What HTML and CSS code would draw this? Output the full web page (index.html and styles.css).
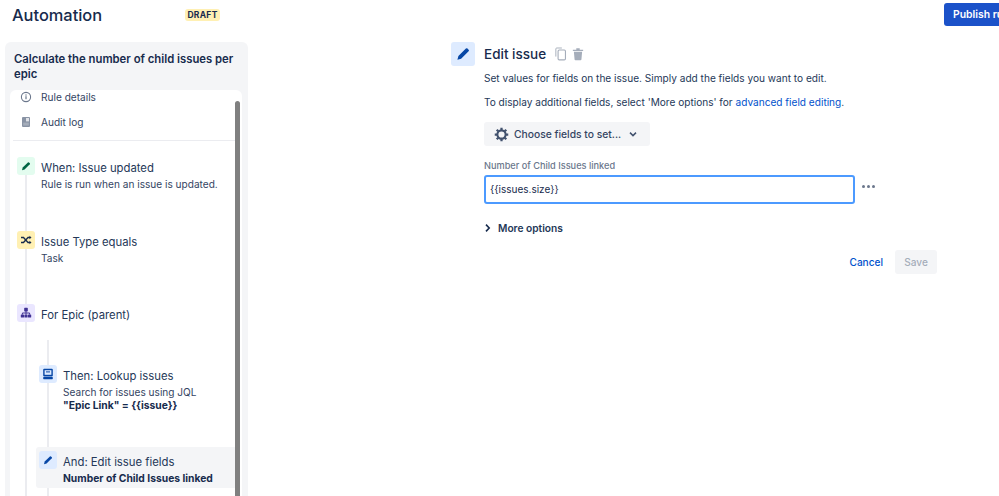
FILE: index.html
```html
<!DOCTYPE html>
<html lang="en">
<head>
<meta charset="utf-8">
<title>Automation</title>
<link rel="stylesheet" href="styles.css">
</head>
<body>
<div class="page">
  <header class="topbar">
    <h1 class="app-title">Automation</h1>
    <span class="lozenge">DRAFT</span>
    <button class="publish">Publish rule</button>
  </header>
  <div class="content">
    <aside class="sidebar">
      <h2 class="rule-name">Calculate the number of child issues per epic</h2>
      <div class="panel">
        <div class="scrollbar"></div>
        <div class="nav-item nav-first">
          <svg class="nav-icon" viewBox="0 0 12 12"><circle cx="6" cy="6" r="4.6" fill="none" stroke="#6b778c" stroke-width="1.1"/><rect x="5.4" y="5.2" width="1.2" height="3" fill="#6b778c"/><rect x="5.4" y="3.4" width="1.2" height="1.2" fill="#6b778c"/></svg>
          <span>Rule details</span>
        </div>
        <div class="nav-item">
          <svg class="nav-icon" viewBox="0 0 12 12"><rect x="2" y="1" width="8" height="10" rx="1" fill="#8993a4"/><rect x="6" y="2" width="3" height="3.4" fill="#dfe1e6"/><rect x="3.2" y="6.6" width="5.6" height="3" fill="#a5adba"/></svg>
          <span>Audit log</span>
        </div>
        <div class="divider"></div>
        <div class="tree">
          <div class="trunk"></div>
          <div class="step step-when">
            <span class="badge badge-green"><svg viewBox="0 0 18 18"><path d="M5 13.2l.7-2.6 5.2-5.2a.8.8 0 0 1 1.1 0l.8.8a.8.8 0 0 1 0 1.1l-5.2 5.2z" fill="#006644"/></svg></span>
            <div><div class="step-title">When: Issue updated</div><div class="step-sub">Rule is run when an issue is updated.</div></div>
          </div>
          <div class="step step-if">
            <span class="badge badge-yellow"><svg viewBox="0 0 18 18"><path d="M4 6.5h2.5l4.5 5H13M4 11.5h2.5l4.5-5H13" fill="none" stroke="#172b4d" stroke-width="1.3"/><path d="M12.5 4.8l2 1.7-2 1.7zM12.5 9.8l2 1.7-2 1.7z" fill="#172b4d"/></svg></span>
            <div><div class="step-title">Issue Type equals</div><div class="step-sub">Task</div></div>
          </div>
          <div class="step step-for">
            <span class="badge badge-purple"><svg viewBox="0 0 18 18"><g fill="#403294"><rect x="7.2" y="3.8" width="3.6" height="3.6" rx=".6"/><rect x="3.8" y="10.4" width="3.2" height="3.2" rx=".6"/><rect x="7.4" y="10.4" width="3.2" height="3.2" rx=".6"/><rect x="11" y="10.4" width="3.2" height="3.2" rx=".6"/></g><path d="M9 7v3.5M5.4 10.5V9h7.2v1.5" fill="none" stroke="#403294"/></svg></span>
            <div class="step-title">For Epic (parent)</div>
          </div>
          <div class="branch">
            <div class="branch-line"></div>
            <div class="step step-then">
              <span class="badge badge-blue"><svg viewBox="0 0 18 18"><rect x="4.2" y="3.8" width="9.6" height="7.6" rx="1" fill="#0747a6"/><rect x="5.6" y="5.2" width="6.8" height="4.6" fill="#deebff"/><rect x="7" y="6.4" width="4" height="1" fill="#0747a6"/><rect x="4.2" y="12" width="9.6" height="2.2" rx=".6" fill="#0747a6"/></svg></span>
              <div><div class="step-title">Then: Lookup issues</div><div class="step-sub tight">Search for issues using JQL</div><div class="step-sub tight strong">"Epic Link" = {{issue}}</div></div>
            </div>
            <div class="step step-and">
              <span class="badge badge-blue"><svg viewBox="0 0 18 18"><path d="M5 13.2l.7-2.6 5.2-5.2a.8.8 0 0 1 1.1 0l.8.8a.8.8 0 0 1 0 1.1l-5.2 5.2z" fill="#0747a6"/></svg></span>
              <div><div class="step-title">And: Edit issue fields</div><div class="step-sub strong">Number of Child Issues linked</div></div>
            </div>
          </div>
        </div>
      </div>
    </aside>
    <main class="editor">
      <span class="editor-badge"><svg viewBox="0 0 24 24"><path d="M6.4 17.8l1-3.7 7.5-7.5a1.1 1.1 0 0 1 1.6 0l1.1 1.1a1.1 1.1 0 0 1 0 1.6l-7.5 7.5z" fill="#0747a6"/></svg></span>
      <div class="editor-body">
        <div class="editor-head">
          <h2 class="editor-title">Edit issue</h2>
          <svg class="head-icon" viewBox="0 0 14 16"><path d="M1 11V2a1 1 0 0 1 1-1h6" fill="none" stroke="#a5adba" stroke-width="1.1"/><rect x="3.6" y="3.4" width="8.6" height="11.4" rx="1.4" fill="none" stroke="#a5adba" stroke-width="1.3"/></svg>
          <svg class="head-icon" viewBox="0 0 14 16"><path d="M1 3h12v1.6H1zM5 1.4h4V3H5z" fill="#a5adba"/><path d="M2.2 5.4h9.6l-.8 9a1 1 0 0 1-1 .9H4a1 1 0 0 1-1-.9z" fill="#a5adba"/></svg>
        </div>
        <p class="desc">Set values for fields on the issue. Simply add the fields you want to edit.</p>
        <p class="desc desc-second">To display additional fields, select 'More options' for <a class="link">advanced field editing</a>.</p>
        <button class="choose">
          <svg class="gear" viewBox="0 0 16 16"><circle cx="8" cy="8" r="4.4" fill="none" stroke="#42526e" stroke-width="2.2"/><g stroke="#42526e" stroke-width="2.4"><path d="M8 .8v2.4M8 12.8v2.4M.8 8h2.4M12.8 8h2.4M2.9 2.9l1.7 1.7M11.4 11.4l1.7 1.7M2.9 13.1l1.7-1.7M11.4 4.6l1.7-1.7"/></g></svg>
          <span>Choose fields to set...</span>
          <svg class="caret" viewBox="0 0 10 10"><path d="M2 3.6l3 3 3-3" fill="none" stroke="#42526e" stroke-width="1.5"/></svg>
        </button>
        <label class="field-label">Number of Child Issues linked</label>
        <div class="field-row">
          <div class="input">{{issues.size}}</div>
          <span class="dots"><i></i><i></i><i></i></span>
        </div>
        <div class="more">
          <svg class="more-caret" viewBox="0 0 8 10"><path d="M2 1.6l3.2 3.4L2 8.4" fill="none" stroke="#172b4d" stroke-width="1.6"/></svg>
          <span>More options</span>
        </div>
        <div class="actions">
          <a class="cancel">Cancel</a>
          <button class="save">Save</button>
        </div>
      </div>
    </main>
  </div>
</div>
</body>
</html>
```
FILE: styles.css
```css
* { box-sizing: border-box; }
html, body { margin: 0; padding: 0; height: 100%; overflow: hidden; background: #fff; }
body { font-family: Inter, "Liberation Sans", sans-serif; color: #172b4d; font-size: 10.1px; }
button { font-family: inherit; border: 0; }
.page { width: 999px; height: 496px; overflow: hidden; display: flex; flex-direction: column; }

.topbar { height: 42px; flex: none; display: flex; align-items: flex-start; padding-left: 12px; overflow: hidden; }
.app-title { margin: 4px 0 0; font-size: 16.4px; line-height: 22px; font-weight: 500; width: 173px; flex: none; }
.lozenge { margin-top: 9px; width: 35px; height: 12px; background: #fff0b3; border-radius: 3px; font-size: 8.5px; line-height: 12px; font-weight: 700; text-align: center; letter-spacing: .3px; color: #172b4d; flex: none; }
.publish { margin: 3px 0 0 724px; width: 90px; height: 23px; flex: none; background: #1b52c9; color: #fff; border-radius: 3px; font-size: 10.4px; font-weight: 600; text-align: left; padding: 0 0 0 9px; }

.content { flex: 1; display: flex; min-height: 0; }
.sidebar { margin-left: 5px; width: 243px; flex: none; background: #f4f5f7; border-radius: 6px 6px 0 0; padding: 10px 6px 0 5px; display: flex; flex-direction: column; overflow: hidden; }
.rule-name { margin: 0 0 9px 4px; font-size: 11.3px; line-height: 14.5px; font-weight: 600; width: 230px; }
.panel { position: relative; flex: 1; background: #fff; border-radius: 6px 6px 0 0; overflow: hidden; }
.scrollbar { position: absolute; z-index: 2; right: 2px; top: 11px; bottom: 0; width: 5px; background: #808080; border-radius: 3px 3px 0 0; }

.nav-item { display: flex; align-items: center; height: 25px; padding-left: 10px; font-size: 10.1px; color: #344563; }
.nav-first { margin-top: -6px; }
.nav-icon { width: 12px; height: 12px; margin-right: 9px; flex: none; }
.divider { height: 1px; background: #ebecf0; margin: 6px 2px 0 3px; }

.tree { position: relative; padding: 16px 0 0 7px; }
.trunk { position: absolute; left: 15px; top: 30px; bottom: -60px; width: 2px; background: #ebecf0; }
.step { position: relative; display: flex; align-items: flex-start; }
.badge { width: 18px; height: 18px; border-radius: 3px; flex: none; margin-right: 6px; }
.badge svg { display: block; width: 18px; height: 18px; }
.badge-green { background: #e3fcef; }
.badge-yellow { background: #fff0b3; }
.badge-purple { background: #eae6ff; }
.badge-blue { background: #deebff; }
.step-title { font-size: 11.3px; line-height: 18px; margin-top: 2px; color: #253858; }
.step-sub { font-size: 10.1px; line-height: 15px; color: #344563; }
.step-sub.tight { line-height: 13px; }
.step-title + .step-sub.tight { margin-top: 1px; }
.step-sub.strong { font-size: 10.3px; font-weight: 700; color: #172b4d; }
.step-when { height: 74px; }
.step-if { height: 73px; }
.step-for { height: 61px; }
.branch { position: relative; }
.branch-line { position: absolute; left: 30px; top: -25px; bottom: -40px; width: 2px; background: #ebecf0; }
.step-then { margin-left: 22px; height: 82px; }
.step-and { margin-left: 19px; padding: 4px 0 0 3px; height: 41px; background: #f4f5f7; border-radius: 3px 0 0 3px; margin-right: 5px; }

.editor { flex: 1; display: flex; padding: 0 0 0 203px; }
.editor-badge { width: 24px; height: 24px; background: #deebff; border-radius: 3px; flex: none; margin-right: 9px; }
.editor-badge svg { display: block; width: 24px; height: 24px; }
.editor-body { width: 453px; flex: none; }
.editor-head { display: flex; align-items: center; height: 24px; }
.editor-title { margin: 0 9px 0 0; font-size: 13.5px; line-height: 24px; font-weight: 500; }
.head-icon { width: 12px; height: 14px; margin-right: 5px; flex: none; }
.desc { margin: 5px 0 0; font-size: 10.1px; line-height: 14px; color: #253858; white-space: nowrap; }
.desc-second { margin-top: 10px; }
.link { color: #0052cc; }
.choose { display: flex; align-items: center; margin-top: 13px; height: 24px; width: 166px; background: #f4f5f7; border-radius: 3px; padding: 0 0 0 10px; color: #344563; font-size: 10.3px; font-weight: 500; }
.gear { width: 15px; height: 15px; margin-right: 5px; flex: none; }
.caret { width: 10px; height: 10px; margin-left: 7px; flex: none; }
.field-label { display: block; margin-top: 14px; font-size: 9.2px; line-height: 12px; font-weight: 500; color: #6b778c; }
.field-row { display: flex; align-items: center; margin-top: 3px; }
.input { width: 371px; height: 29px; border: 2px solid #4c9aff; border-radius: 3px; padding: 0 4px; font-size: 10px; line-height: 25px; color: #172b4d; flex: none; }
.dots { display: flex; gap: 2px; margin: 0 0 6px 7px; }
.dots i { width: 3px; height: 3px; border-radius: 50%; background: #6b778c; }
.more { display: flex; align-items: center; margin-top: 17px; height: 14px; font-size: 10.2px; font-weight: 600; color: #253858; }
.more-caret { width: 8px; height: 10px; margin-right: 6px; flex: none; }
.actions { display: flex; align-items: center; justify-content: flex-end; margin-top: 15px; height: 24px; }
.cancel { color: #0052cc; font-size: 10.1px; font-weight: 500; margin-right: 12px; }
.save { width: 42px; height: 24px; background: #f4f5f7; color: #a5adba; border-radius: 3px; font-size: 10.1px; font-weight: 500; }
```
